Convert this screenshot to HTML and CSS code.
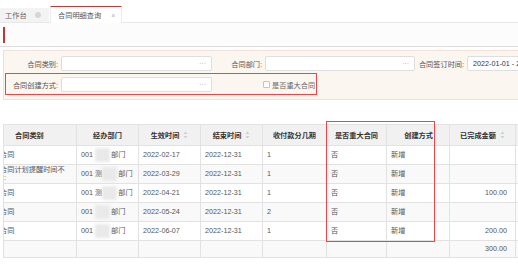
FILE: index.html
```html
<!DOCTYPE html>
<html lang="zh">
<head>
<meta charset="utf-8">
<link rel="stylesheet" href="styles.css">
</head>
<body>
<div class="page">
  <div class="tabs">
    <div class="tab">工作台<span class="tab-ico"></span></div>
    <div class="tab active">合同明细查询<span class="close">×</span></div>
  </div>
  <div class="toolbar"><span class="bar"></span></div>

  <div class="filter">
    <div class="grid">
      <label class="lbl">合同类别:</label>
      <div class="inp"><span class="dots">···</span></div>
      <label class="lbl">合同部门:</label>
      <div class="inp"><span class="dots">···</span></div>
      <label class="lbl">合同签订时间:</label>
      <div class="inp date">2022-01-01 - 2022-12-31</div>

      <label class="lbl">合同创建方式:</label>
      <div class="inp"><span class="dots">···</span></div>
      <span></span>
      <div class="check"><span class="box"></span>是否重大合同</div>
    </div>
  </div>

  <div class="table-wrap">
    <table>
      <colgroup>
        <col class="c1"><col class="c2"><col class="c3"><col class="c4"><col class="c5">
        <col class="c6"><col class="c7"><col class="c8"><col class="c9">
      </colgroup>
      <thead>
        <tr>
          <th class="first">合同类别</th>
          <th>经办部门</th>
          <th>生效时间 <svg class="sort" viewBox="0 0 5 8"><path d="M2.5 0.5 L4.5 3 H0.5 Z M2.5 7.5 L4.5 5 H0.5 Z"/></svg></th>
          <th>结束时间 <svg class="sort" viewBox="0 0 5 8"><path d="M2.5 0.5 L4.5 3 H0.5 Z M2.5 7.5 L4.5 5 H0.5 Z"/></svg></th>
          <th>收付款分几期</th>
          <th>是否重大合同</th>
          <th class="r">创建方式</th>
          <th>已完成金额 <svg class="sort" viewBox="0 0 5 8"><path d="M2.5 0.5 L4.5 3 H0.5 Z M2.5 7.5 L4.5 5 H0.5 Z"/></svg></th>
          <th></th>
        </tr>
      </thead>
      <tbody>
        <tr>
          <td class="first"><div class="clip">合同</div></td>
          <td>001 <span class="blur"></span>部门</td>
          <td>2022-02-17</td><td>2022-12-31</td><td>1</td><td>否</td><td>新增</td><td class="num"></td><td></td>
        </tr>
        <tr class="alt">
          <td class="first"><div class="clip two">合同计划提醒时间不<br><span class="colon">:</span></div></td>
          <td>001 测<span class="blur"></span>部门</td>
          <td>2022-03-29</td><td>2022-12-31</td><td>1</td><td>否</td><td>新增</td><td class="num"></td><td></td>
        </tr>
        <tr>
          <td class="first"><div class="clip">合同</div></td>
          <td>001 测<span class="blur"></span>部门</td>
          <td>2022-04-21</td><td>2022-12-31</td><td>1</td><td>否</td><td>新增</td><td class="num">100.00</td><td></td>
        </tr>
        <tr class="alt">
          <td class="first"><div class="clip">合同</div></td>
          <td>001 <span class="blur"></span>部门</td>
          <td>2022-05-24</td><td>2022-12-31</td><td>2</td><td>否</td><td>新增</td><td class="num"></td><td></td>
        </tr>
        <tr>
          <td class="first"><div class="clip">合同</div></td>
          <td>001 <span class="blur"></span>部门</td>
          <td>2022-06-07</td><td>2022-12-31</td><td>1</td><td>否</td><td>新增</td><td class="num">200.00</td><td></td>
        </tr>
        <tr class="alt sum">
          <td class="first"></td><td></td><td></td><td></td><td></td><td></td><td></td><td class="num">300.00</td><td></td>
        </tr>
      </tbody>
    </table>
  </div>

  <div class="mark mark-filter"></div>
  <div class="mark mark-table"></div>
</div>
</body>
</html>
```

FILE: styles.css
```css
* { box-sizing: border-box; }
html, body { margin: 0; padding: 0; background: #fff; }
body {
  font-family: "Liberation Sans", "Noto Sans CJK SC", sans-serif;
  font-size: 7.2px;
  color: #666;
  width: 518px;
  height: 268px;
  overflow: hidden;
}
.page { position: relative; width: 518px; height: 268px; overflow: hidden; }

/* tabs */
.tabs {
  height: 23px;
  display: flex;
  align-items: flex-end;
  border-bottom: 1px solid #e8e8e8;
  background: #fff;
}
.tab {
  display: flex;
  align-items: center;
  height: 14px;
  padding: 0 5px;
  background: #f3f3f3;
  color: #666;
  width: 49px;
  white-space: nowrap;
  flex: none;
}
.tab-ico {
  width: 6px; height: 6px; border-radius: 50%;
  background: #d6d6d6;
  margin-left: 8px;
}
.tab.active {
  width: 72px;
  height: 17px;
  margin-left: 1px;
  margin-bottom: -1px;
  background: #fff;
  border-top: 1.5px solid #b8413f;
  border-left: 1px solid #ececec;
  border-right: 1px solid #ececec;
  padding: 0 0 0 7px;
  color: #555;
}
.close { color: #b0b0b0; margin-left: 10px; font-size: 7px; }

/* toolbar */
.toolbar {
  height: 24px;
  background: #fcfcfc;
  border-bottom: 1px solid #dcdcdc;
  padding: 4px 0 0 3px;
}
.bar { display: block; width: 1.5px; height: 16px; background: #b53c3a; }

/* filter */
.filter {
  margin: 3px 0 0 3px;
  width: 540px;
  height: 50px;
  background: #fcf6f0;
  border: 1px solid #f2dfd8;
  padding-top: 5px;
}
.grid {
  display: grid;
  grid-template-columns: 54px 151px 47px 150px 46px 80px;
  grid-auto-rows: 15px;
  column-gap: 3px;
  row-gap: 6px;
  align-items: center;
}
.lbl { text-align: right; color: #555; white-space: nowrap; }
.inp {
  height: 15px;
  background: #fff;
  border: 1px solid #dedede;
  border-radius: 2px;
  display: flex;
  align-items: center;
  justify-content: flex-end;
  padding: 0 5px;
  color: #333;
}
.dots { color: #aaa; font-size: 7px; letter-spacing: 0; line-height: 1; }
.inp.date { justify-content: flex-start; padding-left: 5px; white-space: nowrap; overflow: hidden; }
.check { display: flex; align-items: center; color: #666; margin-left: -2px; white-space: nowrap; }
.box {
  width: 7px; height: 7px;
  border: 1px solid #c4c4c4;
  border-radius: 1px;
  background: #fff;
  margin-right: 2px;
}

/* table */
.table-wrap {
  margin: 24px 0 0 3px;
  width: 540px;
}
table {
  border-collapse: collapse;
  table-layout: fixed;
  width: 552px;
}
col.c1 { width: 73px; }
col.c2 { width: 62px; }
col.c3 { width: 62px; }
col.c4 { width: 62px; }
col.c5 { width: 64px; }
col.c6 { width: 60px; }
col.c7 { width: 63px; }
col.c8 { width: 66px; }
col.c9 { width: 40px; }
th, td {
  border: 1px solid #e2e2e2;
  white-space: nowrap;
  overflow: hidden;
}
th {
  height: 21px;
  background: #f1f1f1;
  color: #333;
  font-weight: bold;
  text-align: center;
  padding: 0 4px;
}
th.first { text-align: left; padding-left: 11px; }
th.r { text-align: right; padding-right: 16px; }
.sort { width: 5px; height: 8px; vertical-align: -1px; margin-left: 2px; fill: #cfcfcf; }
td {
  height: 19px;
  padding: 0 4px;
  color: #555;
  background: #fff;
  line-height: 10px;
}
tr.alt td { background: #f9f9f9; }
tr.sum td { height: 17px; }
td.first { padding: 0; }
.clip { margin-left: -4px; white-space: nowrap; overflow: hidden; }
.clip.two { line-height: 7.5px; margin-top: -1px; }
.colon { margin-left: 4px; }
td.num { text-align: right; padding-right: 8px; }
.blur {
  display: inline-block;
  width: 15px;
  height: 14px;
  background: #e9e9e9;
  filter: blur(1.5px);
  vertical-align: middle;
  margin: 0 1px 0 0;
}

/* annotations */
.mark {
  position: absolute;
  border: 1.5px solid #e8484c;
  pointer-events: none;
}
.mark-filter { left: 5px; top: 73px; width: 312px; height: 22px; }
.mark-table { left: 326px; top: 121px; width: 109px; height: 121px; }
```
